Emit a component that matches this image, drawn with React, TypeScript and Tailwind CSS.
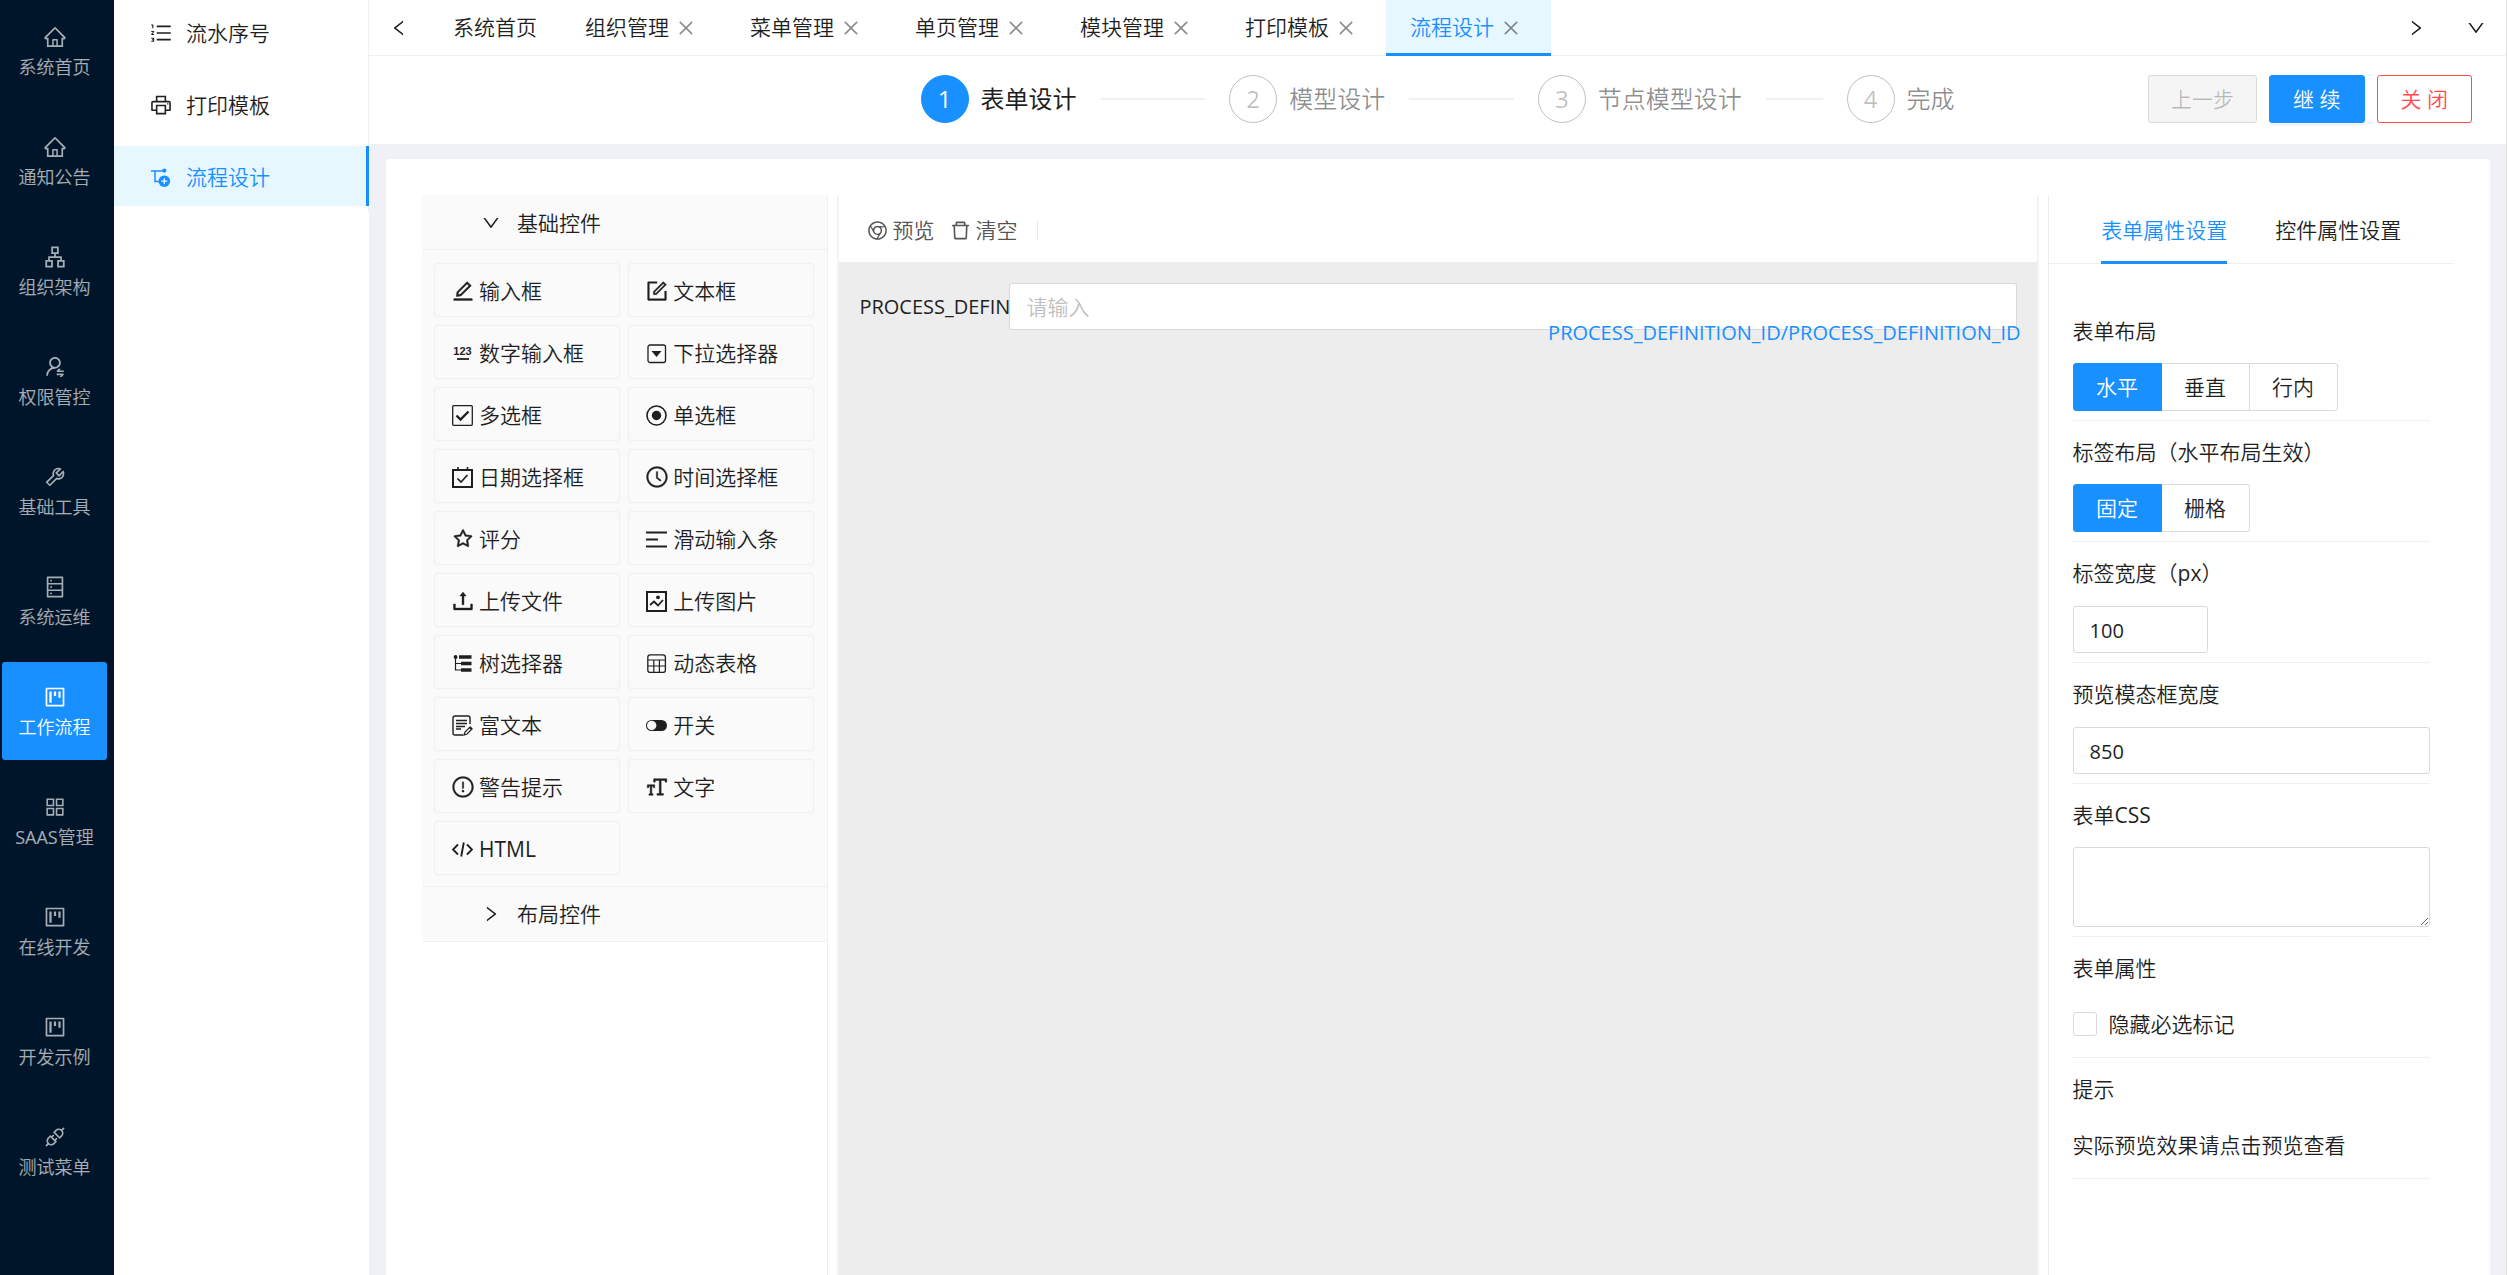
import React from 'react';
import {
    AiOutlineApartment,
    AiOutlineApi,
    AiOutlineAppstore,
    AiOutlineChrome,
    AiOutlineClockCircle,
    AiOutlineClose,
    AiOutlineDatabase,
    AiOutlineDelete,
    AiOutlineDown,
    AiOutlineEdit,
    AiOutlineExclamationCircle,
    AiOutlineFontSize,
    AiOutlineForm,
    AiOutlineHome,
    AiOutlineLeft,
    AiOutlineOrderedList,
    AiOutlinePrinter,
    AiOutlineProject,
    AiOutlineRight,
    AiOutlineStar,
    AiOutlineTool,
    AiOutlineUpload,
    AiOutlineUserSwitch,
} from 'react-icons/ai';

type SvgProps = { children: React.ReactNode };

// 21px grid shared by the custom icons
const Svg = ({ children }: SvgProps) => (
    <svg width="21" height="21" viewBox="0 0 21 21" fill="none" stroke="currentColor" strokeWidth="1.5">
        {children}
    </svg>
);

const FlowIcon = () => (
    <Svg>
        <path d="M1 4H13M5 4V14.5H9" />
        <circle cx="14.3" cy="3.6" r="2.1" fill="currentColor" stroke="none" />
        <circle cx="14.3" cy="14.2" r="5.8" fill="currentColor" stroke="none" />
        <path d="M14.3 11.2V17.2M11.3 14.2H17.3" stroke="#e6f7ff" strokeWidth="1.3" />
    </Svg>
);

const NumberIcon = () => (
    <Svg>
        <text
            x="10.5"
            y="12"
            textAnchor="middle"
            fill="currentColor"
            stroke="none"
            className="font-['Liberation_Sans',sans-serif] text-[11px] font-bold"
        >
            123
        </text>
        <path d="M5 16H17" strokeWidth="1.8" />
    </Svg>
);

const SelectIcon = () => (
    <Svg>
        <rect x="2" y="2" width="17.5" height="17.5" rx="2" strokeWidth="1.3" />
        <path d="M5.5 8H15.5L10.5 14Z" fill="currentColor" stroke="none" />
    </Svg>
);

const CheckIcon = () => (
    <Svg>
        <rect x="0.7" y="0.7" width="19.6" height="19.6" rx="1" strokeWidth="1.3" />
        <path d="M4.5 10.5L8.5 14.5L16.5 6.5" strokeWidth="2.4" />
    </Svg>
);

const RadioIcon = () => (
    <Svg>
        <circle cx="10.5" cy="10.5" r="9.5" strokeWidth="1.6" />
        <circle cx="10.5" cy="10.5" r="4.7" fill="currentColor" stroke="none" />
    </Svg>
);

const CalendarIcon = () => (
    <Svg>
        <path d="M1 3H20V20H1Z" strokeWidth="2" />
        <path d="M6 0V4M15.5 0V4" strokeWidth="1.6" />
        <path d="M5.5 11.5L9 15L15.5 8" strokeWidth="1.7" />
    </Svg>
);

const SliderIcon = () => (
    <Svg>
        <path d="M0 3.5H21M0 10.5H12M0 17.5H21" strokeWidth="1.8" />
    </Svg>
);

const PictureIcon = () => (
    <Svg>
        <path d="M1 1H20V20H1Z" strokeWidth="2" />
        <circle cx="12" cy="6.3" r="1.9" fill="currentColor" stroke="none" />
        <path d="M4 14L8 10.5L12 14.5L17 9" strokeWidth="1.8" />
    </Svg>
);

const TreeIcon = () => (
    <Svg>
        <path d="M7 4H19.5M9 10.5H19.5M9 17H19.5" strokeWidth="3.4" />
        <path d="M3.5 4V17H9M3.5 10.5H9" strokeWidth="1.2" />
        <circle cx="3.6" cy="4" r="1.9" fill="currentColor" stroke="none" />
    </Svg>
);

const TableIcon = () => (
    <Svg>
        <rect x="1.8" y="1.8" width="17.6" height="17.6" rx="2.5" strokeWidth="1.3" />
        <path d="M2 7H19M2 13H19M7.8 7V19M13.4 7V19" strokeWidth="1.2" />
    </Svg>
);

const RichTextIcon = () => (
    <Svg>
        <path d="M11 20H3Q1 20 1 18V3Q1 1 3 1H16Q18 1 18 3V9" strokeWidth="1.4" />
        <path d="M4 5.5H15M4 8.5H15M4 11.5H13M4 14H9" strokeWidth="1.4" />
        <path d="M12 20L13 17L18 12L20 14L15 19Z" strokeWidth="1.2" />
        <path d="M17 13L18.5 11.5L20.5 13.5L19 15Z" fill="currentColor" stroke="none" />
    </Svg>
);

const SwitchIcon = () => (
    <Svg>
        <rect x="0" y="5" width="21" height="11" rx="5.5" fill="currentColor" stroke="none" />
        <circle cx="5.7" cy="10.5" r="4.7" fill="#fafafa" stroke="none" />
    </Svg>
);

const CodeIcon = () => (
    <Svg>
        <path d="M6 5.5L1 10.5L6 15.5M15 5.5L20 10.5L15 15.5M11.8 3.5L9.2 17.5" strokeWidth="1.9" />
    </Svg>
);

const mainMenu = [
    { label: '系统首页', icon: AiOutlineHome },
    { label: '通知公告', icon: AiOutlineHome },
    { label: '组织架构', icon: AiOutlineApartment },
    { label: '权限管控', icon: AiOutlineUserSwitch },
    { label: '基础工具', icon: AiOutlineTool },
    { label: '系统运维', icon: AiOutlineDatabase },
    { label: '工作流程', icon: AiOutlineProject, active: true },
    { label: 'SAAS管理', icon: AiOutlineAppstore },
    { label: '在线开发', icon: AiOutlineProject },
    { label: '开发示例', icon: AiOutlineProject },
    { label: '测试菜单', icon: AiOutlineApi },
];

const subMenu = [
    { label: '流水序号', icon: <AiOutlineOrderedList size={24} /> },
    { label: '打印模板', icon: <AiOutlinePrinter size={24} /> },
    { label: '流程设计', icon: <FlowIcon />, active: true },
];

const tabs = ['系统首页', '组织管理', '菜单管理', '单页管理', '模块管理', '打印模板', '流程设计'];

const steps = ['表单设计', '模型设计', '节点模型设计', '完成'];

const controls = [
    { label: '输入框', icon: <AiOutlineEdit size={24} strokeWidth={16} /> },
    { label: '文本框', icon: <AiOutlineForm size={24} strokeWidth={16} /> },
    { label: '数字输入框', icon: <NumberIcon /> },
    { label: '下拉选择器', icon: <SelectIcon /> },
    { label: '多选框', icon: <CheckIcon /> },
    { label: '单选框', icon: <RadioIcon /> },
    { label: '日期选择框', icon: <CalendarIcon /> },
    { label: '时间选择框', icon: <AiOutlineClockCircle size={24} strokeWidth={12} /> },
    { label: '评分', icon: <AiOutlineStar size={22} strokeWidth={20} /> },
    { label: '滑动输入条', icon: <SliderIcon /> },
    { label: '上传文件', icon: <AiOutlineUpload size={26} strokeWidth={16} /> },
    { label: '上传图片', icon: <PictureIcon /> },
    { label: '树选择器', icon: <TreeIcon /> },
    { label: '动态表格', icon: <TableIcon /> },
    { label: '富文本', icon: <RichTextIcon /> },
    { label: '开关', icon: <SwitchIcon /> },
    { label: '警告提示', icon: <AiOutlineExclamationCircle size={24} strokeWidth={12} /> },
    { label: '文字', icon: <AiOutlineFontSize size={24} strokeWidth={20} className="-scale-x-100" /> },
    { label: 'HTML', icon: <CodeIcon /> },
];

type IconBoxProps = { children: React.ReactNode };

const IconBox = ({ children }: IconBoxProps) => (
    <span className="flex size-[21px] shrink-0 items-center justify-center *:shrink-0">{children}</span>
);

type MixedTextProps = { text: string };

// latin words get a heavier weight than the chinese text beside them
const MixedText = ({ text }: MixedTextProps) => (
    <span className="whitespace-nowrap">
        {text.split(/([A-Za-z]+)/).map((part, i) =>
            i % 2 === 1 ? (
                <span key={i} className="font-normal">
                    {part}
                </span>
            ) : (
                part
            )
        )}
    </span>
);

const MainMenu = () => (
    <nav className="w-[114px] shrink-0 bg-[#001529] pt-0.5 pr-[7px] pl-0.5">
        <ul className="flex flex-col gap-3">
            {mainMenu.map(({ label, icon: Icon, active }) => (
                <li key={label}>
                    <a
                        href="#"
                        className={`flex h-[98px] flex-col items-center gap-1.5 rounded-[3px] pt-6 text-lg leading-7 ${
                            active ? 'bg-[#1890ff] text-white' : 'text-white/65'
                        }`}
                    >
                        <IconBox>
                            <Icon size={24} />
                        </IconBox>
                        <MixedText text={label} />
                    </a>
                </li>
            ))}
        </ul>
    </nav>
);

const SubMenu = () => (
    <nav className="w-[255px] shrink-0 bg-white">
        <ul className="flex flex-col gap-3 border-r border-[#f0f0f0] pt-0.5 pb-1.5">
            {subMenu.map(({ label, icon, active }) => (
                <li key={label} className={active ? '-mr-px' : ''}>
                    <a
                        href="#"
                        className={`flex h-[60px] items-center gap-[15px] pt-0.5 pl-9 ${
                            active ? 'border-r-3 border-[#1890ff] bg-[#e6f7ff] text-[#1890ff]' : ''
                        }`}
                    >
                        <IconBox>{icon}</IconBox>
                        {label}
                    </a>
                </li>
            ))}
        </ul>
    </nav>
);

const TabBar = () => (
    <div className="flex h-14 border-b border-[#f0f0f0] bg-white">
        <button aria-label="向左" className="flex w-[60px] items-center justify-center">
            <AiOutlineLeft size={20} />
        </button>
        <div className="flex flex-1">
            {tabs.map((tab, i) => {
                const active = i === tabs.length - 1;
                return (
                    <div
                        key={tab}
                        className={`flex h-14 items-center border-b-3 px-6 pt-0.5 ${
                            active ? 'border-[#1890ff] bg-[#e6f7ff] text-[#1890ff]' : 'border-transparent'
                        }`}
                    >
                        <button className="whitespace-nowrap">{tab}</button>
                        {i > 0 && (
                            <button aria-label="关闭标签" className="mr-1.5 ml-[7px] text-black/45">
                                <AiOutlineClose size={20} />
                            </button>
                        )}
                    </div>
                );
            })}
        </div>
        <button aria-label="向右" className="flex w-[60px] items-center justify-center">
            <AiOutlineRight size={20} />
        </button>
        <button aria-label="更多" className="flex w-[60px] items-center justify-center">
            <AiOutlineDown size={20} />
        </button>
    </div>
);

const StepBar = () => (
    <div className="grid h-[88px] grid-cols-[1fr_1034px_1fr] items-center bg-white pb-0.5">
        <ol className="col-start-2 flex items-center text-2xl">
            {steps.map((step, i) => (
                <li
                    key={step}
                    className={`flex items-center ${i < steps.length - 1 ? 'flex-1' : ''} ${
                        i === 0 ? '' : 'text-black/45'
                    }`}
                >
                    <span
                        className={`mr-3 flex size-12 items-center justify-center rounded-full border font-normal ${
                            i === 0
                                ? 'border-[#1890ff] bg-[#1890ff] text-white'
                                : 'border-black/25 text-black/25'
                        }`}
                    >
                        {i + 1}
                    </span>
                    <span className={`whitespace-nowrap ${i === 0 ? 'font-normal' : ''}`}>{step}</span>
                    {i < steps.length - 1 && <span className="mx-6 h-0.5 flex-1 bg-[#f0f0f0]" />}
                </li>
            ))}
        </ol>
        <div className="flex justify-end gap-3 pr-[34px]">
            <button
                disabled
                className="h-12 rounded-[3px] border border-[#d9d9d9] bg-[#f5f5f5] px-[22px] text-black/25"
            >
                上一步
            </button>
            <button className="h-12 rounded-[3px] border border-[#1890ff] bg-[#1890ff] px-[23px] text-white shadow-[0_3px_0_rgba(0,0,0,0.04)]">
                继 续
            </button>
            <button className="h-12 rounded-[3px] border border-[#ff4d4f] bg-white px-[23px] text-[#ff4d4f] shadow-[0_3px_0_rgba(0,0,0,0.02)]">
                关 闭
            </button>
        </div>
    </div>
);

const ControlPanel = () => (
    <aside className="w-1/5 shrink-0 border-r border-[#f0f0f0]">
        <div className="rounded-[3px] border-b border-[#f0f0f0] bg-[#fafafa]">
            <button className="flex h-[55px] w-full items-center border-b border-[#f0f0f0] pt-0.5 pl-[59px]">
                <AiOutlineDown size={20} className="mr-4" />
                基础控件
            </button>
            <div className="grid grid-cols-2 gap-2 pt-[13px] pr-[13px] pb-[11px] pl-3">
                {controls.map(({ label, icon }) => (
                    <button
                        key={label}
                        className="flex h-[54px] items-center gap-1.5 rounded-sm border border-[#f0f0f0] pt-0.5 pl-[17px] whitespace-nowrap shadow-[0_0_1px_#e8e8e8]"
                    >
                        <IconBox>{icon}</IconBox>
                        <MixedText text={label} />
                    </button>
                ))}
            </div>
            <button className="flex h-[55px] w-full items-center border-t border-[#f0f0f0] pl-[59px]">
                <AiOutlineRight size={20} className="mr-4" />
                布局控件
            </button>
        </div>
    </aside>
);

const Canvas = () => (
    <section className="mx-px flex min-w-0 flex-1 flex-col border-x-2 border-[#f3f3f3]">
        <div className="flex h-[67px] items-center pt-1 pl-7 text-[#555555]">
            <button className="flex items-center gap-1">
                <IconBox>
                    <AiOutlineChrome size={23} />
                </IconBox>
                预览
            </button>
            <button className="ml-4 flex items-center gap-1">
                <IconBox>
                    <AiOutlineDelete size={23} />
                </IconBox>
                清空
            </button>
            <span className="ml-5 h-[19px] w-px bg-[#e8e8e8]" />
        </div>
        <div className="flex-1 bg-[#ededed] px-5 pt-[21px]">
            <div className="relative flex items-center">
                <label
                    htmlFor="process-id"
                    className="w-[150px] shrink-0 overflow-hidden text-xl font-normal whitespace-nowrap"
                >
                    PROCESS_DEFINITION_ID
                </label>
                <input
                    id="process-id"
                    placeholder="请输入"
                    className="h-[47px] min-w-0 flex-1 rounded-[3px] border border-[#d9d9d9] bg-white px-4 placeholder:text-[#bfbfbf]"
                />
                <span className="absolute top-9 -right-1 text-xl font-normal whitespace-nowrap text-[#1890ff]">
                    PROCESS_DEFINITION_ID/PROCESS_DEFINITION_ID
                </span>
            </div>
        </div>
    </section>
);

type FieldProps = { label: string; htmlFor?: string; children: React.ReactNode };

const Field = ({ label, htmlFor, children }: FieldProps) => (
    <div className="border-b border-[#f0f0f0] pt-[15px] pb-[9px]">
        {htmlFor ? (
            <label htmlFor={htmlFor} className="mb-4 block leading-8">
                <MixedText text={label} />
            </label>
        ) : (
            <p className="mb-4 leading-8">{label}</p>
        )}
        <div className="flex min-h-12 items-center">{children}</div>
    </div>
);

type RadioGroupProps = { name: string; options: string[] };

const RadioGroup = ({ name, options }: RadioGroupProps) => (
    <div role="radiogroup" className="flex">
        {options.map((option, i) => (
            <label
                key={option}
                className="relative -ml-px flex h-12 w-[89px] items-center justify-center border border-[#d9d9d9] first:ml-0 first:rounded-l-[3px] last:rounded-r-[3px] has-checked:z-10 has-checked:border-[#1890ff] has-checked:bg-[#1890ff] has-checked:text-white"
            >
                <input type="radio" name={name} defaultChecked={i === 0} className="sr-only" />
                {option}
            </label>
        ))}
    </div>
);

const PropertyPanel = () => (
    <aside className="w-1/5 shrink-0 border-l border-[#ececec]">
        <div className="flex h-[69px] justify-center gap-12 border-b border-[#f0f0f0]">
            <button className="h-[69px] border-b-3 border-[#1890ff] pt-1 whitespace-nowrap text-[#1890ff]">
                表单属性设置
            </button>
            <button className="h-[69px] border-b-3 border-transparent pt-1 whitespace-nowrap">
                控件属性设置
            </button>
        </div>
        <form className="mt-9 px-6">
            <Field label="表单布局">
                <RadioGroup name="layout" options={['水平', '垂直', '行内']} />
            </Field>
            <Field label="标签布局（水平布局生效）">
                <RadioGroup name="label-layout" options={['固定', '栅格']} />
            </Field>
            <Field label="标签宽度（px）" htmlFor="label-width">
                <input
                    id="label-width"
                    defaultValue="100"
                    className="h-[47px] w-[135px] rounded-[3px] border border-[#d9d9d9] px-4 pt-0.5 text-xl font-normal"
                />
            </Field>
            <Field label="预览模态框宽度" htmlFor="modal-width">
                <input
                    id="modal-width"
                    defaultValue="850"
                    className="h-[47px] w-full rounded-[3px] border border-[#d9d9d9] px-4 pt-0.5 text-xl font-normal"
                />
            </Field>
            <Field label="表单CSS" htmlFor="form-css">
                <textarea
                    id="form-css"
                    className="h-20 w-full rounded-[3px] border border-[#d9d9d9] px-4 py-1.5"
                />
            </Field>
            <Field label="表单属性">
                <label className="flex items-center gap-3">
                    <input
                        type="checkbox"
                        className="size-6 appearance-none rounded-[3px] border border-[#d9d9d9] bg-white checked:bg-[#1890ff]"
                    />
                    隐藏必选标记
                </label>
            </Field>
            <Field label="提示">实际预览效果请点击预览查看</Field>
        </form>
    </aside>
);

export default function App() {
    return (
        <div className="flex min-h-screen bg-white font-['Open_Sans','Noto_Sans_CJK_SC',sans-serif] text-[21px] leading-[33px] font-[350] text-[#1f1f1f]">
            <MainMenu />
            <SubMenu />
            <div className="mr-px flex min-w-0 flex-1 flex-col border-r border-[#e3e3e3] bg-[#f0f1f6]">
                <TabBar />
                <StepBar />
                <main className="mt-[15px] mr-4 ml-[17px] flex flex-1 gap-2 rounded-t-[3px] bg-white px-9 pt-9">
                    <ControlPanel />
                    <Canvas />
                    <PropertyPanel />
                </main>
            </div>
        </div>
    );
}
